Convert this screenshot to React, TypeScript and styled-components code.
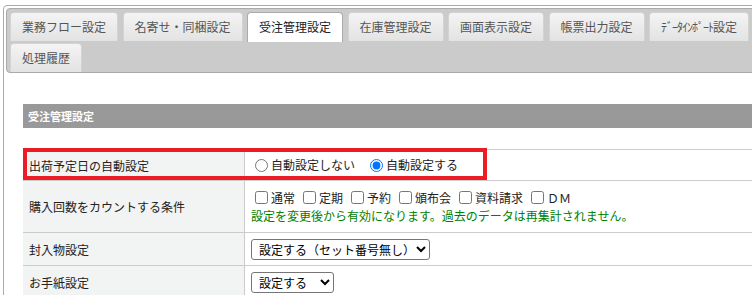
import styled, { createGlobalStyle } from 'styled-components'

const GlobalStyle = createGlobalStyle`
  html, body {
    margin: 0;
    padding: 0;
    overflow: hidden;
    background: #fff;
  }
  body {
    font-family: "Noto Sans CJK JP", "Noto Sans", sans-serif;
    font-size: 12px;
    color: #222;
  }
`

const Frame = styled.div`
  box-sizing: border-box;
  width: 810px;
  margin: 5px 0 0 3px;
  padding: 2px;
  border: 1px solid #aaa;
  border-radius: 4px;
  background: #fff;
`

const TabNav = styled.ul`
  display: flex;
  flex-wrap: wrap;
  row-gap: 2px;
  margin: 0;
  padding: 3px 3px 0;
  list-style: none;
  background: #cbcbcb;
  border: 1px solid #aaa;
  border-radius: 4px;
`

const Tab = styled.li<{ $active?: boolean }>`
  margin-right: 4.5px;
  padding: 6px 11px ${p => (p.$active ? '7px' : '6px')};
  margin-bottom: ${p => (p.$active ? '-1px' : '0')};
  line-height: 16px;
  font-size: 12px;
  white-space: nowrap;
  border: 1px solid ${p => (p.$active ? '#aaa' : '#d3d3d3')};
  border-bottom: 0;
  border-radius: 4px 4px 0 0;
  background: ${p => (p.$active ? '#fff' : 'linear-gradient(#f4f4f4, #ebebeb 50%, #e3e3e3)')};
  color: ${p => (p.$active ? '#212121' : '#555')};
`

const HalfKana = styled.span`
  letter-spacing: -1px;
`

const Panel = styled.div`
  padding: 31px 0 40px 17px;
`

const SectionHead = styled.div`
  height: 24px;
  line-height: 24px;
  padding-left: 5px;
  margin-bottom: 21px;
  background: #999;
  color: #fff;
  font-size: 11px;
  font-weight: bold;
`

const TableWrap = styled.div`
  position: relative;
`

const Highlight = styled.div`
  position: absolute;
  top: -1px;
  left: 0;
  width: 464px;
  height: 32px;
  box-sizing: border-box;
  border: 4px solid #ec1c24;
  pointer-events: none;
`

const Table = styled.table`
  width: 780px;
  border-collapse: collapse;
  table-layout: fixed;
  font-size: 12px;
`

const Label = styled.th<{ $h: number }>`
  width: 209px;
  height: ${p => p.$h}px;
  padding: 0 6px;
  text-align: left;
  font-weight: normal;
  color: #222;
  background: #f2f3f3;
  border-top: 1px solid #ccc;
  border-bottom: 1px solid #ccc;
  border-right: 1px solid #ccc;
`

const Value = styled.td`
  padding: 0 6px;
  vertical-align: middle;
  color: #222;
  border-top: 1px solid #ccc;
  border-bottom: 1px solid #ccc;
`

const Line = styled.div`
  display: flex;
  align-items: center;
  line-height: 18px;
`

const Choice = styled.label<{ $gap: number }>`
  display: inline-flex;
  align-items: center;
  margin-right: ${p => p.$gap}px;

  input {
    width: 13px;
    height: 13px;
    margin: 0 3px 0 4px;
  }
`

const Note = styled.div`
  line-height: 18px;
  color: #008000;
`

const Select = styled.select<{ $w: number }>`
  display: block;
  width: ${p => p.$w}px;
  height: 21px;
  padding: 0 0 0 3px;
  font-family: inherit;
  font-size: 12px;
  color: #000;
  background: #fff;
  border: 1px solid #767676;
  border-radius: 3px;
`

const tabs = ['業務フロー設定', '名寄せ・同梱設定', '受注管理設定', '在庫管理設定', '画面表示設定', '帳票出力設定']
const counts = ['通常', '定期', '予約', '頒布会', '資料請求', 'ＤＭ']

export default function App() {
  return (
    <>
      <GlobalStyle />
      <Frame>
        <TabNav>
          {tabs.map(t => (
            <Tab key={t} $active={t === '受注管理設定'}>{t}</Tab>
          ))}
          <Tab>
            <HalfKana>ﾃﾞｰﾀｲﾝﾎﾟｰﾄ</HalfKana>設定
          </Tab>
          <Tab>処理履歴</Tab>
        </TabNav>
        <Panel>
          <SectionHead>受注管理設定</SectionHead>
          <TableWrap>
            <Table>
              <tbody>
                <tr>
                  <Label $h={30}>出荷予定日の自動設定</Label>
                  <Value>
                    <Line>
                      <Choice $gap={11}>
                        <input type="radio" name="auto" />自動設定しない
                      </Choice>
                      <Choice $gap={0}>
                        <input type="radio" name="auto" defaultChecked />自動設定する
                      </Choice>
                    </Line>
                  </Value>
                </tr>
                <tr>
                  <Label $h={51}>購入回数をカウントする条件</Label>
                  <Value>
                    <Line>
                      {counts.map(c => (
                        <Choice key={c} $gap={4}>
                          <input type="checkbox" />{c}
                        </Choice>
                      ))}
                    </Line>
                    <Note>設定を変更後から有効になります。過去のデータは再集計されません。</Note>
                  </Value>
                </tr>
                <tr>
                  <Label $h={32}>封入物設定</Label>
                  <Value>
                    <Select $w={179} defaultValue="set">
                      <option value="none">設定しない</option>
                      <option value="set">設定する（セット番号無し）</option>
                    </Select>
                  </Value>
                </tr>
                <tr>
                  <Label $h={32}>お手紙設定</Label>
                  <Value>
                    <Select $w={83} defaultValue="set">
                      <option value="none">設定しない</option>
                      <option value="set">設定する</option>
                    </Select>
                  </Value>
                </tr>
              </tbody>
            </Table>
            <Highlight />
          </TableWrap>
        </Panel>
      </Frame>
    </>
  )
}
